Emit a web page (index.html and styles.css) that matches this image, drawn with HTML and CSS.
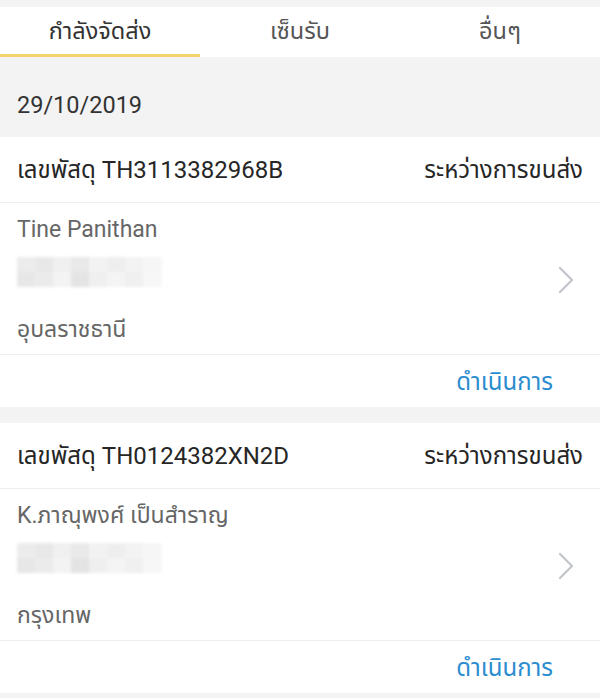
FILE: index.html
```html
<!DOCTYPE html>
<html lang="th">
<head>
    <meta charset="UTF-8">
    <meta name="viewport" content="width=device-width, initial-scale=1.0">
    <title>รายการพัสดุ</title>
    <link rel="stylesheet" href="styles.css">
</head>
<body>

<nav class="tabs">
    <div class="tab active">กำลังจัดส่ง</div>
    <div class="tab">เซ็นรับ</div>
    <div class="tab">อื่นๆ</div>
</nav>

<div class="date-row">29/10/2019</div>

<div class="parcel">
    <div class="parcel-head">
        <span class="parcel-no">เลขพัสดุ TH3113382968B</span>
        <span class="parcel-status">ระหว่างการขนส่ง</span>
    </div>
    <div class="parcel-body">
        <div class="receiver">
            <div class="receiver-name">Tine Panithan</div>
            <div class="address-blur"></div>
            <div class="receiver-city">อุบลราชธานี</div>
        </div>
        <svg class="chevron" width="16" height="28" viewBox="0 0 16 28">
            <path d="M2 2 L14 14 L2 26" fill="none" stroke="#c4c8cc" stroke-width="2.4" stroke-linecap="round" stroke-linejoin="round"/>
        </svg>
    </div>
    <div class="parcel-foot">
        <a class="action">ดำเนินการ</a>
    </div>
</div>

<div class="parcel">
    <div class="parcel-head">
        <span class="parcel-no">เลขพัสดุ TH0124382XN2D</span>
        <span class="parcel-status">ระหว่างการขนส่ง</span>
    </div>
    <div class="parcel-body">
        <div class="receiver">
            <div class="receiver-name">K.ภาณุพงศ์ เป็นสำราญ</div>
            <div class="address-blur"></div>
            <div class="receiver-city">กรุงเทพ</div>
        </div>
        <svg class="chevron" width="16" height="28" viewBox="0 0 16 28">
            <path d="M2 2 L14 14 L2 26" fill="none" stroke="#c4c8cc" stroke-width="2.4" stroke-linecap="round" stroke-linejoin="round"/>
        </svg>
    </div>
    <div class="parcel-foot">
        <a class="action">ดำเนินการ</a>
    </div>
</div>

</body>
</html>
```

FILE: styles.css
```css
body {
    font-family: Roboto, "Noto Sans Thai", "Noto Sans", sans-serif;
    background-color: #f3f3f3;
    margin: 0;
    padding-top: 7px;
    color: #262626;
}

.tabs {
    display: flex;
    background-color: #fff;
    height: 50px;
}

.tab {
    flex: 1;
    display: flex;
    align-items: center;
    justify-content: center;
    font-size: 23.5px;
    color: #555;
    border-bottom: 3px solid transparent;
    box-sizing: border-box;
    padding-top: 3px;
}

.tab.active {
    color: #333;
    border-bottom-color: #f3d36e;
}

.date-row {
    height: 80px;
    box-sizing: border-box;
    padding: 33px 17px 0;
    line-height: 30px;
    font-size: 23.5px;
    color: #333;
}

.parcel {
    background-color: #fff;
    margin-bottom: 16px;
}

.parcel-head {
    display: flex;
    justify-content: space-between;
    align-items: center;
    height: 66px;
    padding: 3px 17px 0;
    box-sizing: border-box;
    font-size: 24px;
    border-bottom: 1px solid #eee;
}

.parcel-body {
    display: flex;
    align-items: center;
    padding: 12px 26px 9px 17px;
    border-bottom: 1px solid #eee;
}

.receiver {
    flex: 1;
}

.receiver-name,
.receiver-city {
    font-size: 23px;
    line-height: 30px;
    color: #666;
}

.address-blur {
    width: 145px;
    height: 30px;
    margin: 12px 0 28px;
    background:
        linear-gradient(90deg, #ececec 0 18px, #e8e8e8 18px 36px, #f0f0f0 36px 54px, #e9e9e9 54px 72px, #f2f2f2 72px 90px, #eeeeee 90px 108px, #f3f3f3 108px 126px, #f6f6f6 126px) top / 100% 50% no-repeat,
        linear-gradient(90deg, #e7e7e7 0 18px, #ebebeb 18px 36px, #f3f3f3 36px 54px, #e4e4e4 54px 72px, #efefef 72px 90px, #f4f4f4 90px 108px, #f0f0f0 108px 126px, #f7f7f7 126px) bottom / 100% 50% no-repeat;
    filter: blur(1.5px);
    border-radius: 2px;
}

.chevron {
    display: block;
}

.parcel-foot {
    display: flex;
    justify-content: flex-end;
    align-items: center;
    height: 52px;
    padding: 3px 47px 0 17px;
    box-sizing: border-box;
}

.action {
    font-size: 24px;
    color: #2b8ccf;
    cursor: pointer;
}
```
